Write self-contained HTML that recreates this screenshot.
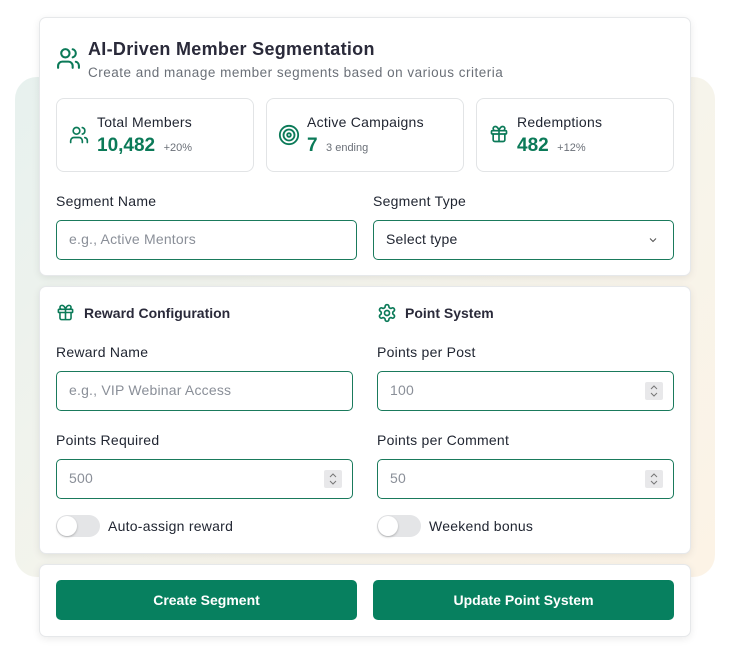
<!DOCTYPE html>
<html><head><style>
*{box-sizing:border-box;margin:0;padding:0}
body{width:730px;height:670px;background:#fff;font-family:"Liberation Sans",sans-serif;position:relative;overflow:hidden;color:#1f2430}
.bg{position:absolute;left:15px;top:77px;width:700px;height:500px;border-radius:22px;background:linear-gradient(135deg,#e7f1ee 0%,#f5f4ec 50%,#fcf3e6 100%)}
.card{position:absolute;left:39px;width:652px;background:#fff;border:1px solid #e6e8ea;border-radius:7px;box-shadow:0 2px 8px rgba(0,0,0,0.08)}
.t{position:absolute;white-space:nowrap}
.stat{position:absolute;top:80px;width:198px;height:74px;border:1px solid #e2e4e6;border-radius:8px;background:#fff}
.lbl{font-size:14px;color:#1f2430;letter-spacing:0.25px}
.inp{position:absolute;height:40px;border:1.5px solid #1a7a5c;border-radius:5px;background:#fff;font-size:14px;color:#8a8f98;padding-left:12px;line-height:37px;letter-spacing:0.2px}
.spin{position:absolute;right:10px;top:10px;width:18px;height:18px;background:#e8e8ea;border-radius:2px}
.tog{position:absolute;width:44px;height:22px;border-radius:11px;background:#e4e5e7}
.tog:after{content:"";position:absolute;left:1px;top:1px;width:20px;height:20px;border-radius:50%;background:#fff;box-shadow:0 1px 2px rgba(0,0,0,.25)}
.btn{position:absolute;top:15px;width:301px;height:40px;background:#07805f;border-radius:5px;color:#fff;font-weight:bold;font-size:14px;text-align:center;line-height:40px}
.g{color:#0b7a58}
</style></head><body>
<div class="bg"></div>

<div class="card" style="top:17px;height:259px">
  <svg class="t" style="left:16px;top:28px" width="25" height="25" viewBox="0 0 24 24" fill="none" stroke="#0b7a58" stroke-width="2" stroke-linecap="round"><path d="M16 21v-2a4 4 0 0 0-4-4H6a4 4 0 0 0-4 4v2"/><circle cx="9" cy="7" r="4"/><path d="M22 21v-2a4 4 0 0 0-3-3.87M16 3.13a4 4 0 0 1 0 7.75"/></svg>
  <div class="t" style="left:48px;top:21px;font-size:18px;font-weight:bold;color:#2a2a3a;letter-spacing:0.3px">AI-Driven Member Segmentation</div>
  <div class="t" style="left:48px;top:47px;font-size:13.5px;color:#6b7078;letter-spacing:0.5px">Create and manage member segments based on various criteria</div>

  <div class="stat" style="left:16px">
    <svg class="t" style="left:12px;top:26px" width="20" height="20" viewBox="0 0 24 24" fill="none" stroke="#0b7a58" stroke-width="2" stroke-linecap="round"><path d="M16 21v-2a4 4 0 0 0-4-4H6a4 4 0 0 0-4 4v2"/><circle cx="9" cy="7" r="4"/><path d="M22 21v-2a4 4 0 0 0-3-3.87M16 3.13a4 4 0 0 1 0 7.75"/></svg>
    <div class="t lbl" style="left:40px;top:15px">Total Members</div>
    <div class="t" style="left:40px;top:36px"><span class="g" style="font-size:19px;font-weight:bold">10,482</span> <span style="font-size:11px;color:#6b7078;margin-left:4px">+20%</span></div>
  </div>
  <div class="stat" style="left:226px">
    <svg class="t" style="left:11px;top:25px" width="22" height="22" viewBox="0 0 24 24" fill="none" stroke="#0b7a58" stroke-width="2"><circle cx="12" cy="12" r="10"/><circle cx="12" cy="12" r="6"/><circle cx="12" cy="12" r="2"/></svg>
    <div class="t lbl" style="left:40px;top:15px">Active Campaigns</div>
    <div class="t" style="left:40px;top:36px"><span class="g" style="font-size:19px;font-weight:bold">7</span> <span style="font-size:11px;color:#6b7078;margin-left:4px">3 ending</span></div>
  </div>
  <div class="stat" style="left:436px">
    <svg class="t" style="left:12px;top:25px" width="20" height="20" viewBox="0 0 24 24" fill="none" stroke="#0b7a58" stroke-width="2" stroke-linecap="round"><rect x="3" y="8" width="18" height="4" rx="1"/><path d="M12 8v13M19 12v7a2 2 0 0 1-2 2H7a2 2 0 0 1-2-2v-7M7.5 8a2.5 2.5 0 0 1 0-5C11 3 12 8 12 8s1-5 4.5-5a2.5 2.5 0 0 1 0 5"/></svg>
    <div class="t lbl" style="left:40px;top:15px">Redemptions</div>
    <div class="t" style="left:40px;top:36px"><span class="g" style="font-size:19px;font-weight:bold">482</span> <span style="font-size:11px;color:#6b7078;margin-left:4px">+12%</span></div>
  </div>

  <div class="t lbl" style="left:16px;top:175px">Segment Name</div>
  <div class="t lbl" style="left:333px;top:175px">Segment Type</div>
  <div class="inp" style="left:16px;top:202px;width:301px">e.g., Active Mentors</div>
  <div class="inp" style="left:333px;top:202px;width:301px;color:#1f2430">Select type
    <svg class="t" style="right:14px;top:13px" width="12" height="12" viewBox="0 0 24 24" fill="none" stroke="#555" stroke-width="2.2"><path d="M6 9l6 6 6-6"/></svg></div>
</div>

<div class="card" style="top:286px;height:268px">
  <svg class="t" style="left:16px;top:16px" width="19" height="19" viewBox="0 0 24 24" fill="none" stroke="#0b7a58" stroke-width="2" stroke-linecap="round"><rect x="3" y="8" width="18" height="4" rx="1"/><path d="M12 8v13M19 12v7a2 2 0 0 1-2 2H7a2 2 0 0 1-2-2v-7M7.5 8a2.5 2.5 0 0 1 0-5C11 3 12 8 12 8s1-5 4.5-5a2.5 2.5 0 0 1 0 5"/></svg>
  <div class="t" style="left:44px;top:18px;font-size:14px;font-weight:bold;color:#2a2a3a">Reward Configuration</div>
  <svg class="t" style="left:337px;top:16px" width="20" height="20" viewBox="0 0 24 24" fill="none" stroke="#0b7a58" stroke-width="2"><circle cx="12" cy="12" r="3"/><path d="M12.22 2h-.44a2 2 0 0 0-2 2v.18a2 2 0 0 1-1 1.73l-.43.25a2 2 0 0 1-2 0l-.15-.08a2 2 0 0 0-2.730.73l-.22.38a2 2 0 0 0 .73 2.73l.15.1a2 2 0 0 1 1 1.72v.51a2 2 0 0 1-1 1.74l-.15.09a2 2 0 0 0-.73 2.73l.22.38a2 2 0 0 0 2.73.73l.15-.08a2 2 0 0 1 2 0l.43.25a2 2 0 0 1 1 1.73V20a2 2 0 0 0 2 2h.44a2 2 0 0 0 2-2v-.18a2 2 0 0 1 1-1.73l.43-.25a2 2 0 0 1 2 0l.15.08a2 2 0 0 0 2.73-.73l.22-.39a2 2 0 0 0-.73-2.73l-.15-.08a2 2 0 0 1-1-1.740v-.5a2 2 0 0 1 1-1.74l.15-.09a2 2 0 0 0 .73-2.73l-.22-.38a2 2 0 0 0-2.73-.73l-.15.08a2 2 0 0 1-2 0l-.43-.25a2 2 0 0 1-1-1.73V4a2 2 0 0 0-2-2z"/></svg>
  <div class="t" style="left:365px;top:18px;font-size:14px;font-weight:bold;color:#2a2a3a">Point System</div>

  <div class="t lbl" style="left:16px;top:57px">Reward Name</div>
  <div class="t lbl" style="left:337px;top:57px">Points per Post</div>
  <div class="inp" style="left:16px;top:84px;width:297px">e.g., VIP Webinar Access</div>
  <div class="inp" style="left:337px;top:84px;width:297px">100<div class="spin"><svg style="position:absolute;left:4px;top:2px" width="10" height="14" viewBox="0 0 10 14" fill="none" stroke="#777" stroke-width="1"><path d="M2 5l3-3 3 3M2 9l3 3 3-3"/></svg></div></div>

  <div class="t lbl" style="left:16px;top:145px">Points Required</div>
  <div class="t lbl" style="left:337px;top:145px">Points per Comment</div>
  <div class="inp" style="left:16px;top:172px;width:297px">500<div class="spin"><svg style="position:absolute;left:4px;top:2px" width="10" height="14" viewBox="0 0 10 14" fill="none" stroke="#777" stroke-width="1"><path d="M2 5l3-3 3 3M2 9l3 3 3-3"/></svg></div></div>
  <div class="inp" style="left:337px;top:172px;width:297px">50<div class="spin"><svg style="position:absolute;left:4px;top:2px" width="10" height="14" viewBox="0 0 10 14" fill="none" stroke="#777" stroke-width="1"><path d="M2 5l3-3 3 3M2 9l3 3 3-3"/></svg></div></div>

  <div class="tog" style="left:16px;top:228px"></div>
  <div class="t lbl" style="left:68px;top:231px">Auto-assign reward</div>
  <div class="tog" style="left:337px;top:228px"></div>
  <div class="t lbl" style="left:389px;top:231px">Weekend bonus</div>
</div>

<div class="card" style="top:564px;height:73px">
  <div class="btn" style="left:16px">Create Segment</div>
  <div class="btn" style="left:333px">Update Point System</div>
</div>
</body></html>
